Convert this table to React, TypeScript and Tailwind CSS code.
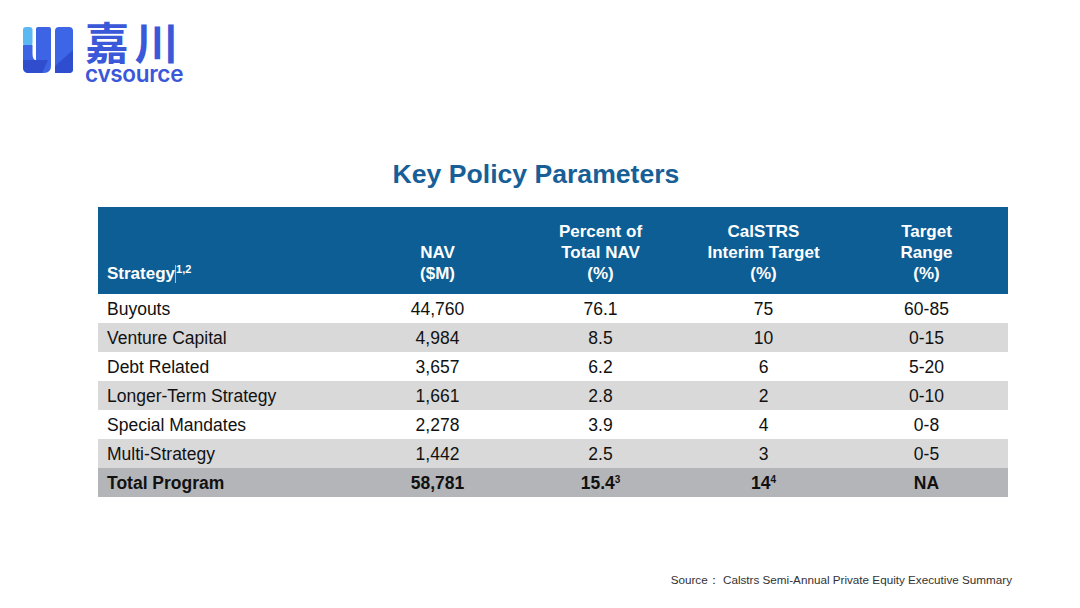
import React from "react";

const rows = [
  { s: "Buyouts", nav: "44,760", pct: "76.1", tgt: "75", rng: "60-85" },
  { s: "Venture Capital", nav: "4,984", pct: "8.5", tgt: "10", rng: "0-15" },
  { s: "Debt Related", nav: "3,657", pct: "6.2", tgt: "6", rng: "5-20" },
  { s: "Longer-Term Strategy", nav: "1,661", pct: "2.8", tgt: "2", rng: "0-10" },
  { s: "Special Mandates", nav: "2,278", pct: "3.9", tgt: "4", rng: "0-8" },
  { s: "Multi-Strategy", nav: "1,442", pct: "2.5", tgt: "3", rng: "0-5" },
];

function Logo() {
  return (
    <div className="flex items-start">
      <svg width="62" height="62" viewBox="0 0 62 62">
        <rect x="5" y="7" width="9.5" height="19" rx="3" fill="#5cb8f3" />
        <path
          d="M5,25 L14.5,25 L14.5,34 Q14.5,41 20,41 L18,41 L18,9 Q18,7 20,7 L31,7 Q33,7 33,9 L33,46 Q33,53 26,53 L11,53 Q5,53 5,47 Z"
          fill="#3d64e4"
        />
        <path d="M5,40 L30,40 L24,53 L11,53 Q5,53 5,47 Z" fill="#2f4dcc" />
        <rect x="37" y="7" width="18" height="46" rx="4" fill="#3d66e6" />
        <path d="M55,30 L55,49 Q55,53 51,53 L37,53 L37,46 Z" fill="#2f4ecf" />
      </svg>
      <div className="ml-[5px] flex flex-col">
        <div
          className="text-[44px] leading-[44px] font-bold text-[#3a58d8] tracking-[5.5px] -mt-[1px]"
          style={{ fontFamily: '"Noto Sans CJK SC", sans-serif' }}
        >
          嘉川
        </div>
        <div
          className="text-[22.5px] leading-[18px] font-semibold text-[#3a58d8] tracking-[-0.3px] mt-[2px]"
          style={{ fontFamily: "Inter, sans-serif" }}
        >
          cvsource
        </div>
      </div>
    </div>
  );
}

export default function App() {
  return (
    <div
      className="w-[1080px] h-[608px] bg-white flex flex-col overflow-hidden"
      style={{ fontFamily: '"Liberation Sans", Arial, sans-serif' }}
    >
      <div className="pt-[20px] pl-[18px] h-[82px]">
        <Logo />
      </div>
      <div className="mt-[79px] pr-[8px] text-center text-[26.6px] leading-none font-bold text-[#175f96]">
        Key Policy Parameters
      </div>
      <div className="mt-[19px] ml-[98px] w-[910px] text-[#111]">
        <div className="grid grid-cols-[258px_163px_163px_163px_163px] h-[87px] bg-[#0d5e94] text-white font-bold text-[17px] leading-[21px] items-end pb-[10px]">
          <div className="pl-[9px] flex items-start">
            <span>Strategy</span>
            <span className="w-[1px] h-[18px] bg-[#c9b9a0] mt-[2px]" />
            <span className="text-[11px] leading-[12px]">1,2</span>
          </div>
          <div className="text-center">
            NAV
            <br />
            ($M)
          </div>
          <div className="text-center">
            Percent of
            <br />
            Total NAV
            <br />
            (%)
          </div>
          <div className="text-center">
            CalSTRS
            <br />
            Interim Target
            <br />
            (%)
          </div>
          <div className="text-center">
            Target
            <br />
            Range
            <br />
            (%)
          </div>
        </div>
        {rows.map((r, i) => (
          <div
            key={r.s}
            className={`grid grid-cols-[258px_163px_163px_163px_163px] h-[29px] items-center pt-[2px] text-[17.5px] ${
              i % 2 === 1 ? "bg-[#d9d9d9]" : "bg-white"
            }`}
          >
            <div className="pl-[9px]">{r.s}</div>
            <div className="text-center">{r.nav}</div>
            <div className="text-center">{r.pct}</div>
            <div className="text-center">{r.tgt}</div>
            <div className="text-center">{r.rng}</div>
          </div>
        ))}
        <div className="grid grid-cols-[258px_163px_163px_163px_163px] h-[29px] items-center pt-[2px] text-[17.5px] font-bold bg-[#b4b5b8]">
          <div className="pl-[9px]">Total Program</div>
          <div className="text-center">58,781</div>
          <div className="text-center">
            15.4<sup className="text-[10px] top-[-6px]">3</sup>
          </div>
          <div className="text-center">
            14<sup className="text-[10px] top-[-6px]">4</sup>
          </div>
          <div className="text-center">NA</div>
        </div>
      </div>
      <div className="mt-[76px] pr-[68px] text-right text-[11.7px] leading-[14px] text-[#333]">
        Source：&nbsp;Calstrs Semi-Annual Private Equity Executive Summary
      </div>
    </div>
  );
}
